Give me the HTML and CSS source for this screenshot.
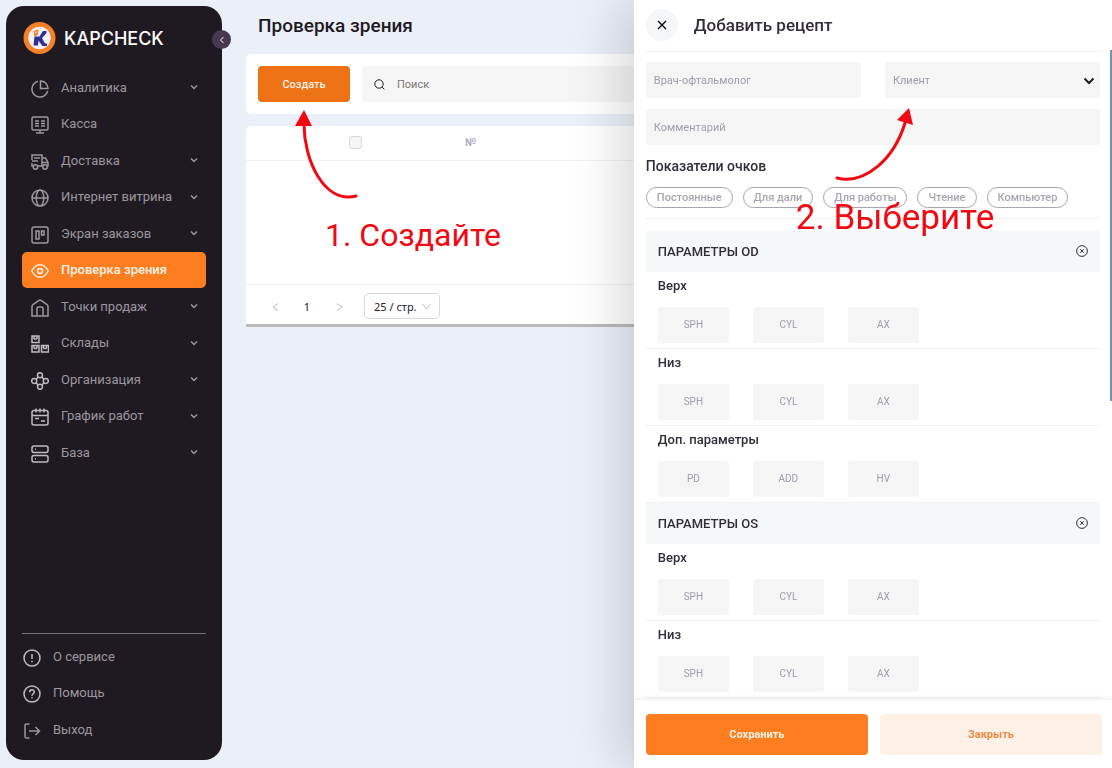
FILE: index.html
```
<!DOCTYPE html>
<html lang="ru">
<head>
    <meta charset="UTF-8">
    <meta name="viewport" content="width=device-width, initial-scale=1.0">
    <title>Проверка зрения</title>
    <link rel="stylesheet" href="styles.css">
</head>
<body>
    <svg class="sprite" aria-hidden="true">
        <symbol id="down" viewBox="0 0 8 6"><path d="M1 1.5l3 3 3-3"/></symbol>
        <symbol id="clear" viewBox="0 0 12 12"><circle cx="6" cy="6" r="5.4"/><path d="M4.2 4.2l3.6 3.6M7.800 4.200L4.200 7.800"/></symbol>
    </svg>

    <aside class="sidebar">
        <div class="logo">
            <svg width="34" height="34" viewBox="0 0 34 34">
                <circle cx="17.500" cy="17" r="16" fill="#f58025"/>
                <circle cx="17.500" cy="17" r="11.200" fill="#f3f0f6"/>
                <path d="M12.500 15.500h4.500l-1 9h-4.500z" fill="#2f3192"/>
                <path d="M16 17.500L21 10h3.500v2L20 17l3 5.500h2V25h-4.500l-4.500-6z" fill="#2f3192"/>
                <path d="M11.500 10l5-1.500-.5 5-3.500 2.500z" fill="#f58025"/>
                <path d="M13 11.500l2-.5" stroke="#fff" stroke-width="1"/>
            </svg>
            <span>KAPCHECK</span>
        </div>
        <button class="collapse" aria-label="Свернуть меню">
            <svg width="6" height="8" viewBox="0 0 6 8"><path d="M4.500 1l-3 3 3 3"/></svg>
        </button>

        <nav class="menu">
            <a href="#"><svg class="icon" viewBox="0 0 18 18"><path d="M7 1.300A8 8 0 1 0 16.700 11"/><path d="M9.500 1v7.500H17A7.500 7.500 0 0 0 9.500 1z"/></svg>Аналитика<svg class="arrow"><use href="#down"/></svg></a>
            <a href="#"><svg class="icon" viewBox="0 0 18 18"><rect x="1" y="1" width="16" height="13" rx="1.500"/><path d="M4 5h4M4 7.500h4M4 10h4M10 5h4M10 7.500h4M10 10h4M9 14v3M5 17h8"/></svg>Касса</a>
            <a href="#"><svg class="icon" viewBox="0 0 18 18"><path d="M1 7V2h10v11H7M11 5h3.500L17 9.500V13h-.5M1 10v3h1M3 5h6M1 8h6M11 9.500h6"/><circle cx="4.500" cy="14" r="2.200"/><circle cx="14" cy="14" r="2.200"/></svg>Доставка<svg class="arrow"><use href="#down"/></svg></a>
            <a href="#"><svg class="icon" viewBox="0 0 18 18"><circle cx="9" cy="9" r="8"/><ellipse cx="9" cy="9" rx="3.800" ry="8"/><path d="M1 9h16"/></svg>Интернет витрина<svg class="arrow"><use href="#down"/></svg></a>
            <a href="#"><svg class="icon" viewBox="0 0 18 18"><rect x="1" y="1" width="16" height="16" rx="2"/><path d="M5 5h3v8H5zM10.500 5h2.500v4h-2.500z"/></svg>Экран заказов<svg class="arrow"><use href="#down"/></svg></a>
            <a href="#" class="active"><svg class="icon" viewBox="0 0 18 18"><path d="M.7 9C3 4.800 5.700 2.700 9 2.700S15 4.800 17.300 9C15 13.200 12.300 15.300 9 15.300S3 13.200.7 9z"/><circle cx="9" cy="9" r="2.500"/></svg>Проверка зрения</a>
            <a href="#"><svg class="icon" viewBox="0 0 18 18"><path d="M1 17V7.500c0-.8.300-1.300 1-1.800l6-4.300c.7-.5 1.300-.5 2 0l6 4.300c.7.500 1 1 1 1.800V17zM6 17V9.500C6 8.700 6.500 8 7.500 8h3c1 0 1.500.7 1.500 1.500V17"/></svg>Точки продаж<svg class="arrow"><use href="#down"/></svg></a>
            <a href="#"><svg class="icon light" viewBox="0 0 18 18"><path d="M1 1h7v6.500H1zM1 10.500h7V17H1zM10.500 10.500h7V17h-7zM3 4h3M3 13.500h3M12.500 13.500h3M3 1v3M6 1v3M3 10.500v3M6 10.500v3M12.500 10.500v3M15.500 10.500v3"/></svg>Склады<svg class="arrow"><use href="#down"/></svg></a>
            <a href="#"><svg class="icon light" viewBox="0 0 18 18"><circle cx="9" cy="3.200" r="2.500"/><circle cx="9" cy="14.800" r="2.500"/><circle cx="3.200" cy="9" r="2.500"/><circle cx="14.800" cy="9" r="2.500"/><path d="M7.200 5L5 7.200M10.800 5L13 7.200M5 10.800L7.200 13M13 10.800L10.800 13"/></svg>Организация<svg class="arrow"><use href="#down"/></svg></a>
            <a href="#"><svg class="icon light" viewBox="0 0 18 18"><rect x="1" y="2.500" width="16" height="14.500" rx="2"/><path d="M1 7.500h16M5 .5v4M9 .5v4M13 .5v4M4 10.500h4M10 13h4"/></svg>График работ<svg class="arrow"><use href="#down"/></svg></a>
            <a href="#"><svg class="icon light" viewBox="0 0 18 18"><rect x="1" y="1" width="16" height="6.500" rx="2"/><rect x="1" y="10.500" width="16" height="6.500" rx="2"/><path d="M4 4.200h1M4 13.800h1"/></svg>База<svg class="arrow"><use href="#down"/></svg></a>
        </nav>

        <nav class="menu menu-bottom">
            <a href="#"><svg class="icon light" viewBox="0 0 18 18"><circle cx="9" cy="9" r="8"/><path d="M9 5v5M9 11.800v1.400"/></svg>О сервисе</a>
            <a href="#"><svg class="icon light" viewBox="0 0 18 18"><circle cx="9" cy="9" r="8"/><path d="M6.700 7.200C6.700 4 11.300 4 11.300 7c0 1.700-2.300 1.900-2.300 3.800M9 12.200v1.300"/></svg>Помощь</a>
            <a href="#"><svg class="icon" viewBox="0 0 18 18"><path d="M6.500 2H3.500C2.500 2 2 2.500 2 3.500v11c0 1 .5 1.500 1.500 1.500h3M6 9h10.500M12.500 5l4 4-4 4"/></svg>Выход</a>
        </nav>
    </aside>

    <main class="main">
        <h1>Проверка зрения</h1>
        <div class="toolbar">
            <button class="btn btn-create">Создать</button>
            <label class="search">
                <svg width="11" height="11" viewBox="0 0 11 11"><circle cx="5" cy="5" r="4.200"/><path d="M8 8l2.300 2.300"/></svg>
                <input type="text" placeholder="Поиск" aria-label="Поиск">
            </label>
        </div>
        <div class="list">
            <table>
                <thead>
                    <tr>
                        <th class="col-check"><input type="checkbox" aria-label="Выбрать все"></th>
                        <th>№</th>
                    </tr>
                </thead>
                <tbody>
                    <tr><td colspan="2"></td></tr>
                </tbody>
            </table>
            <div class="pagination">
                <button aria-label="Назад"><svg width="7" height="8" viewBox="0 0 7 8"><path d="M6 .5L1 4l5 3.500"/></svg></button>
                <span>1</span>
                <button aria-label="Вперёд"><svg width="7" height="8" viewBox="0 0 7 8"><path d="M1 .5L6 4 1 7.500"/></svg></button>
                <div class="page-size">
                    <select aria-label="Строк на странице"><option>25 / стр.</option></select>
                    <svg width="9" height="7" viewBox="0 0 9 7"><path d="M.5 1l4 5 4-5"/></svg>
                </div>
            </div>
        </div>
    </main>

    <section class="drawer">
        <header>
            <button class="close" aria-label="Закрыть окно"><svg width="10" height="10" viewBox="0 0 10 10"><path d="M1 1l8 8M9 1L1 9"/></svg></button>
            <h2>Добавить рецепт</h2>
        </header>
        <div class="drawer-body">
            <div class="fields">
                <input class="field" type="text" placeholder="Врач-офтальмолог" aria-label="Врач-офтальмолог">
                <div class="client">
                    <select class="field" aria-label="Клиент"><option>Клиент</option></select>
                    <svg width="12" height="8" viewBox="0 0 12 8"><path d="M1.500 1.500L6 6l4.500-4.500"/></svg>
                </div>
                <input class="field wide" type="text" placeholder="Комментарий" aria-label="Комментарий">
            </div>
            <h3>Показатели очков</h3>
            <div class="tags">
                <button>Постоянные</button>
                <button>Для дали</button>
                <button>Для работы</button>
                <button>Чтение</button>
                <button>Компьютер</button>
            </div>

            <div class="section-head">
                <h3>ПАРАМЕТРЫ OD</h3>
                <button aria-label="Очистить OD"><svg width="12" height="12"><use href="#clear"/></svg></button>
            </div>
            <div class="group">
                <h4>Верх</h4>
                <input type="text" placeholder="SPH" aria-label="SPH">
                <input type="text" placeholder="CYL" aria-label="CYL">
                <input type="text" placeholder="AX" aria-label="AX">
            </div>
            <div class="group">
                <h4>Низ</h4>
                <input type="text" placeholder="SPH" aria-label="SPH">
                <input type="text" placeholder="CYL" aria-label="CYL">
                <input type="text" placeholder="AX" aria-label="AX">
            </div>
            <div class="group">
                <h4>Доп. параметры</h4>
                <input type="text" placeholder="PD" aria-label="PD">
                <input type="text" placeholder="ADD" aria-label="ADD">
                <input type="text" placeholder="HV" aria-label="HV">
            </div>

            <div class="section-head">
                <h3>ПАРАМЕТРЫ OS</h3>
                <button aria-label="Очистить OS"><svg width="12" height="12"><use href="#clear"/></svg></button>
            </div>
            <div class="group">
                <h4>Верх</h4>
                <input type="text" placeholder="SPH" aria-label="SPH">
                <input type="text" placeholder="CYL" aria-label="CYL">
                <input type="text" placeholder="AX" aria-label="AX">
            </div>
            <div class="group">
                <h4>Низ</h4>
                <input type="text" placeholder="SPH" aria-label="SPH">
                <input type="text" placeholder="CYL" aria-label="CYL">
                <input type="text" placeholder="AX" aria-label="AX">
            </div>
        </div>
        <span class="thumb"></span>
        <footer>
            <button class="btn btn-save">Сохранить</button>
            <button class="btn btn-cancel">Закрыть</button>
        </footer>

        <!-- step 2 -->
        <svg class="pointer pointer-2" width="80" height="78" viewBox="0 0 80 78">
            <path class="line" d="M4 71C32 78 61 52 72 16"/>
            <path class="head" d="M76 1L64 13l16 5z"/>
        </svg>
        <span class="note note-2">2. Выберите</span>
    </section>

    <!-- step 1 -->
    <svg class="pointer pointer-1" width="66" height="92" viewBox="0 0 66 92">
        <path class="line" d="M10 14C10 50 30 94 62 86"/>
        <path class="head" d="M10 0L1 16h17z"/>
    </svg>
    <span class="note note-1">1. Создайте</span>
</body>
</html>
```
FILE: styles.css
```
* {
    box-sizing: border-box;
}
body {
    margin: 0;
    display: flex;
    min-height: 100vh;
    background: #ebeff8;
    font-family: Roboto, "Liberation Sans", sans-serif;
    font-size: 13px;
    color: #1f1a24;
    overflow: hidden;
}
h1, h2, h3, h4 {
    margin: 0;
    font-weight: 500;
}
button, input, select {
    font-family: inherit;
    margin: 0;
    padding: 0;
    border: none;
    outline: none;
}
button {
    background: none;
    cursor: pointer;
}
svg {
    fill: none;
    stroke: currentColor;
    flex-shrink: 0;
}
.logo svg {
    stroke: none;
}
.sprite {
    position: absolute;
    width: 0;
    height: 0;
}

/* sidebar */
.sidebar {
    position: relative;
    display: flex;
    flex-direction: column;
    width: 216px;
    margin: 6px 0 8px 6px;
    padding: 15px 16px 13px;
    border-radius: 18px;
    background: #1f1a22;
    flex-shrink: 0;
}
.logo {
    display: flex;
    align-items: center;
    gap: 8px;
    height: 34px;
    color: #fff;
    font: 500 18px Inter, sans-serif;
}
.collapse {
    position: absolute;
    top: 24px;
    right: -9px;
    display: flex;
    align-items: center;
    justify-content: center;
    width: 19px;
    height: 19px;
    border-radius: 50%;
    background: #46384f;
    color: #fff;
}
.menu {
    display: flex;
    flex-direction: column;
    justify-content: space-between;
    height: 401px;
    margin-top: 14px;
}
.menu a {
    display: flex;
    align-items: center;
    height: 36px;
    padding: 0 8px;
    border-radius: 5px;
    color: #9c979f;
    text-decoration: none;
}
.menu .active {
    background: #fd7e20;
    color: #fff3e6;
    font-weight: 500;
}
.icon {
    width: 18px;
    height: 18px;
    margin: 3px 12px 0 1px;
    stroke-width: 1.5;
}
.menu .light {
    color: #c0bbc2;
}
.arrow {
    width: 8px;
    height: 6px;
    margin-left: auto;
    stroke-width: 1.5;
}
.menu-bottom {
    height: 114px;
    margin-top: auto;
    padding-top: 4px;
    border-top: 1px solid #777279;
}
.menu-bottom a {
    padding: 0;
}

/* page */
.main {
    flex: 1;
    padding: 12px 0 0 24px;
}
h1 {
    padding-left: 12px;
    font-size: 19px;
    line-height: 28px;
}
.toolbar {
    display: flex;
    gap: 12px;
    margin-top: 14px;
    padding: 12px;
    border-radius: 5px;
    background: #fff;
}
.btn {
    border-radius: 4px;
    font-size: 11px;
    font-weight: 500;
    color: #fff3e6;
}
.btn-create {
    width: 92px;
    height: 36px;
    background: #ed7216;
}
.search {
    display: flex;
    flex: 1;
    align-items: center;
    gap: 12px;
    padding-left: 12px;
    border-radius: 4px;
    background: #f5f5f5;
}
.search input {
    flex: 1;
    background: none;
    font-size: 11px;
}
.search input::placeholder {
    color: #777;
}
.list {
    margin-top: 12px;
    border-bottom: 3px solid #bbb;
    border-radius: 5px 5px 0 0;
    background: #fff;
}
table {
    width: 100%;
    border-collapse: collapse;
}
th {
    height: 34px;
    padding: 0;
    border-bottom: 1px solid #f2f2f4;
    text-align: left;
    font-size: 11px;
    font-weight: 500;
    color: #aaa5bb;
}
.col-check {
    width: 219px;
    text-align: center;
}
.col-check input {
    appearance: none;
    display: block;
    width: 13px;
    height: 13px;
    margin: 0 auto;
    border: 1px solid #d9d9d9;
    border-radius: 3px;
    background: #f5f5f5;
}
td {
    height: 124px;
    border-bottom: 1px solid #f0f0f0;
}
.pagination {
    display: flex;
    align-items: center;
    height: 39px;
    padding: 4px 0 0 13px;
    font: 11px "Noto Sans", sans-serif;
}
.pagination button, .pagination > span {
    width: 32px;
    text-align: center;
    color: #1f1a24;
}
.pagination button {
    color: #bbb;
}
.page-size {
    position: relative;
    margin-left: 9px;
}
.page-size select {
    appearance: none;
    display: block;
    width: 76px;
    height: 26px;
    padding-left: 9px;
    border: 1px solid #d9d9d9;
    border-radius: 5px;
    background: #fff;
    font-size: 11px;
    color: #1f1a24;
}
.page-size svg {
    position: absolute;
    top: 10px;
    right: 9px;
    color: #bbb;
}

/* drawer */
.drawer {
    position: fixed;
    top: 0;
    right: 0;
    bottom: 0;
    display: flex;
    flex-direction: column;
    width: 43%;
    background: #fff;
    box-shadow: -12px 0 50px rgba(0, 0, 0, 0.16);
}
.drawer header {
    display: flex;
    align-items: center;
    gap: 16px;
    height: 52px;
    margin: 0 10px 0 12px;
    padding-bottom: 2px;
    border-bottom: 1px solid #f0f0f6;
    flex-shrink: 0;
}
.close {
    display: flex;
    align-items: center;
    justify-content: center;
    width: 32px;
    height: 32px;
    border-radius: 50%;
    background: #f5f6f8;
    stroke-width: 1.3;
}
h2 {
    font-size: 17px;
    color: #312c38;
}
.drawer-body {
    flex: 1;
    min-height: 0;
    padding: 10px 12px 0;
    overflow-y: auto;
    scrollbar-width: none;
}
.fields {
    display: grid;
    grid-template-columns: 1fr 1fr;
    gap: 11px 24px;
}
.field {
    appearance: none;
    display: block;
    width: 100%;
    height: 36px;
    padding: 0 8px;
    border-radius: 3px;
    background: #f5f5f5;
    font-size: 11px;
    color: #a09cab;
}
.field::placeholder, .group input::placeholder {
    color: #a09cab;
}
.wide {
    grid-column: span 2;
}
.client {
    position: relative;
}
.client svg {
    position: absolute;
    top: 15px;
    right: 5px;
    color: #1f1a24;
    stroke-width: 2;
}
.drawer-body > h3 {
    margin-top: 11px;
    font-size: 14px;
    line-height: 20px;
    color: #312c38;
}
.tags {
    display: flex;
    gap: 10px;
    margin-bottom: 12px;
    padding: 11px 0 10px;
    border-bottom: 1px solid #f0f0f6;
}
.tags button {
    height: 21px;
    padding: 0 10px;
    border: 1px solid #a8a5b0;
    border-radius: 11px;
    font-size: 11px;
    font-weight: 500;
    color: #a8a5b3;
    white-space: nowrap;
}
.section-head {
    display: flex;
    align-items: center;
    justify-content: space-between;
    height: 41px;
    padding: 0 12px 1px;
    background: #f5f8f9;
}
.section-head h3, h4 {
    font-size: 13px;
    color: #312c38;
}
.section-head button {
    display: flex;
    stroke-width: 0.8;
}
.group {
    display: flex;
    flex-wrap: wrap;
    gap: 13px 24px;
    height: 77px;
    padding: 6px 12px 5px;
    border-bottom: 1px solid #f0f0f6;
}
h4 {
    width: 100%;
    line-height: 16px;
}
.group input {
    width: 71px;
    height: 36px;
    padding-bottom: 2px;
    border-radius: 3px;
    background: #f5f5f5;
    text-align: center;
    font-size: 10px;
}
.thumb {
    position: absolute;
    top: 50px;
    right: 0;
    width: 2px;
    height: 351px;
    background: #7597a8;
}
.drawer footer {
    position: relative;
    display: flex;
    gap: 12px;
    padding: 14px 10px 13px 12px;
    background: #fff;
    box-shadow: 0 -2px 4px rgba(0, 0, 0, 0.07);
}
.drawer footer .btn {
    flex: 1;
    height: 41px;
    font-size: 11px;
    font-weight: 700;
}
.btn-save {
    background: #fd7e20;
}
.drawer footer .btn-cancel {
    background: #fdf0e6;
    color: #ee8a42;
}

/* hints drawn over the page */
.pointer, .note {
    position: absolute;
    color: #f20810;
    pointer-events: none;
}
.line {
    stroke-width: 3;
    stroke-linecap: round;
}
.head {
    fill: #f20810;
    stroke: none;
}
.note {
    line-height: 40px;
    white-space: nowrap;
}
.pointer-1 {
    left: 294px;
    top: 110px;
}
.note-1 {
    left: 325px;
    top: 215px;
    font-size: 32px;
}
.pointer-2 {
    left: 199px;
    top: 107px;
}
.note-2 {
    left: 162px;
    top: 198px;
    font-size: 35px;
}
```
